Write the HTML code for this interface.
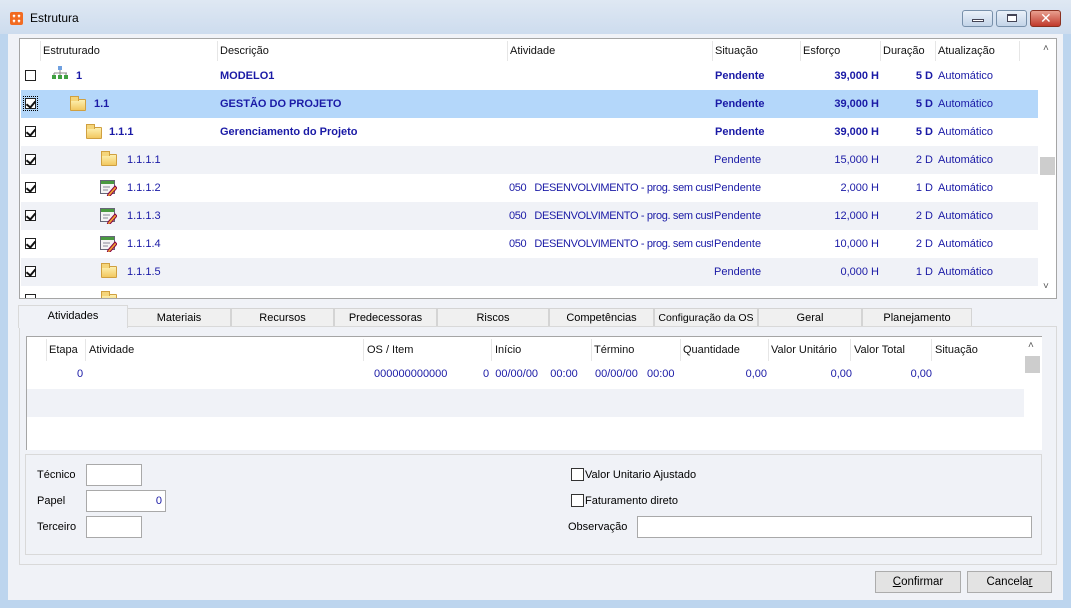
<!DOCTYPE html>
<html><head><meta charset="utf-8"><style>
*{margin:0;padding:0;box-sizing:border-box}
body{width:1071px;height:608px;position:relative;overflow:hidden;background:#bdd5ee;font-family:"Liberation Sans","DejaVu Sans",sans-serif;font-size:11px;color:#000}
.a{position:absolute;white-space:nowrap}
.title{left:0;top:0;width:1071px;height:34px;background:linear-gradient(#dfe8f3,#cddcee)}
.client{left:8px;top:34px;width:1055px;height:566px;background:#f0f2f7}
.grid{left:19px;top:38px;width:1038px;height:261px;border:1px solid #a5a5a5;background:#fff;overflow:hidden}
.hd{color:#111}
.row{position:absolute;left:1px;width:1017px;height:28px}
.row .a{top:8px}
.b{color:#1a1aa6}
.bold{font-weight:bold}
.cb{position:absolute;width:11px;height:11px;border:1px solid #222;background:#fff}
.cb.c::after{content:"";position:absolute;left:2px;top:0px;width:4px;height:7px;border:solid #111;border-width:0 2px 2px 0;transform:rotate(40deg)}
.fold{position:absolute;width:16px;height:12px;background:linear-gradient(#fdf0b0,#f2c860);border:1px solid #d0a040;border-radius:1px}
.fold::before{content:"";position:absolute;left:-1px;top:-4px;width:7px;height:4px;background:#f5d57a;border:1px solid #d0a040;border-bottom:none}
.tab{position:absolute;top:308px;height:19px;background:#f0f0f0;border:1px solid #d4d4d4;border-bottom:none;text-align:center;line-height:18px;font-size:11px;overflow:hidden}
.inp{position:absolute;background:#fff;border:1px solid #a9a9a9;height:22px}
.btn{position:absolute;top:571px;height:22px;background:#e3e3e3;border:1px solid #acacac;text-align:center;line-height:20px;font-size:11.5px}
.wb{position:absolute;top:10px;width:31px;height:17px;border:1px solid #7890aa;border-radius:3px;background:linear-gradient(#eaf1f9,#c3d4e8)}
.act{width:204px;overflow:hidden;letter-spacing:-0.35px}
</style></head><body>
<div class="a title"></div>
<div class="a" style="left:10px;top:12px;width:13px;height:13px;background:#f26b21;border-radius:2px"><svg width="13" height="13"><path d="M3 3l2 2M5 3L3 5M8 3l2 2M10 3L8 5M3 8l2 2M5 8L3 10M8 8l2 2M10 8L8 10" stroke="#fff" stroke-width="1.3"/></svg></div>
<div class="a" style="left:30px;top:11px;font-size:12px;color:#000">Estrutura</div>
<div class="wb" style="left:962px"><div style="position:absolute;left:9px;top:8px;width:12px;height:3px;background:#fff;border:1px solid #445"></div></div>
<div class="wb" style="left:996px"><div style="position:absolute;left:10px;top:3px;width:10px;height:8px;background:#fff;border:1px solid #445;border-top-width:2px"></div></div>
<div class="wb" style="left:1030px;background:linear-gradient(#e8a090,#c0392b);border-color:#8a3020"><div style="position:absolute;left:9px;top:-1px;color:#fff;font-weight:bold;font-size:14px">✕</div></div>
<div class="a client"></div>

<div class="a grid">
 <div class="row" style="top:0;height:23px;background:#fff">
  <span class="a hd" style="left:22px;top:6px">Estruturado</span><span class="a hd" style="left:199px;top:6px">Descrição</span><span class="a hd" style="left:489px;top:6px">Atividade</span><span class="a hd" style="left:694px;top:6px">Situação</span><span class="a hd" style="left:782px;top:6px">Esforço</span><span class="a hd" style="left:862px;top:6px">Duração</span><span class="a hd" style="left:917px;top:6px">Atualização</span>
  <div class="a" style="left:19px;top:2px;width:1px;height:20px;background:#e6e6e6"></div><div class="a" style="left:196px;top:2px;width:1px;height:20px;background:#e6e6e6"></div><div class="a" style="left:486px;top:2px;width:1px;height:20px;background:#e6e6e6"></div><div class="a" style="left:691px;top:2px;width:1px;height:20px;background:#e6e6e6"></div><div class="a" style="left:779px;top:2px;width:1px;height:20px;background:#e6e6e6"></div><div class="a" style="left:859px;top:2px;width:1px;height:20px;background:#e6e6e6"></div><div class="a" style="left:914px;top:2px;width:1px;height:20px;background:#e6e6e6"></div><div class="a" style="left:998px;top:2px;width:1px;height:20px;background:#e6e6e6"></div>
 </div>
 <div class="row" style="top:23px;background:#fff">
  <div class="cb" style="left:4px;top:8px"></div>
  <svg class="a" style="left:31px;top:4px" width="17" height="14"><rect x="6" y="0" width="4" height="4" fill="#6fa0e0"/><path d="M8 4v3M2 7h13M2 7v3M8 7v3M14 7v3" stroke="#888"/><rect x="0" y="9" width="4" height="4" fill="#3fa040"/><rect x="6" y="9" width="4" height="4" fill="#3fa040"/><rect x="12" y="9" width="4" height="4" fill="#3fa040"/></svg>
  <span class="a b bold" style="left:55px">1</span><span class="a b bold" style="left:199px">MODELO1</span>
  <span class="a b bold" style="left:694px">Pendente</span><span class="a b bold" style="left:780px;width:78px;text-align:right">39,000 H</span><span class="a b bold" style="left:860px;width:52px;text-align:right">5 D</span><span class="a b" style="left:917px">Automático</span>
 </div>
 <div class="row" style="top:51px;background:#b4d7fa">
  <div class="cb c" style="left:4px;top:8px;outline:1px dotted #000;outline-offset:1px"></div>
  <div class="fold" style="left:49px;top:9px"></div>
  <span class="a b bold" style="left:73px">1.1</span><span class="a b bold" style="left:199px">GESTÃO DO PROJETO</span>
  <span class="a b bold" style="left:694px">Pendente</span><span class="a b bold" style="left:780px;width:78px;text-align:right">39,000 H</span><span class="a b bold" style="left:860px;width:52px;text-align:right">5 D</span><span class="a b" style="left:917px">Automático</span>
 </div>
 <div class="row" style="top:79px;background:#fff">
  <div class="cb c" style="left:4px;top:8px"></div>
  <div class="fold" style="left:65px;top:9px"></div>
  <span class="a b bold" style="left:88px">1.1.1</span><span class="a b bold" style="left:199px">Gerenciamento do Projeto</span>
  <span class="a b bold" style="left:694px">Pendente</span><span class="a b bold" style="left:780px;width:78px;text-align:right">39,000 H</span><span class="a b bold" style="left:860px;width:52px;text-align:right">5 D</span><span class="a b" style="left:917px">Automático</span>
 </div>
 <div class="row" style="top:107px;background:#f0f2f7">
  <div class="cb c" style="left:4px;top:8px"></div><div class="fold" style="left:80px;top:8px"></div>
  <span class="a b" style="left:106px">1.1.1.1</span>
  <span class="a b" style="left:693px">Pendente</span><span class="a b" style="left:780px;width:78px;text-align:right">15,000 H</span><span class="a b" style="left:860px;width:52px;text-align:right">2 D</span><span class="a b" style="left:917px">Automático</span>
 </div>
 <div class="row" style="top:135px;background:#fff">
  <div class="cb c" style="left:4px;top:8px"></div>
  <svg class="a" style="left:79px;top:6px" width="17" height="16"><rect x="0.5" y="0.5" width="14" height="13" fill="#f4f4f4" stroke="#667"/><rect x="1" y="1" width="13" height="3" fill="#4a9a40"/><path d="M3 7h7M3 10h5" stroke="#889"/><path d="M8 14l7-8 2 2-7 8-3 1z" fill="#f0a030" stroke="#804"/></svg>
  <span class="a b" style="left:106px">1.1.1.2</span><span class="a b act" style="left:488px">050&nbsp;&nbsp; DESENVOLVIMENTO - prog. sem cust</span>
  <span class="a b" style="left:693px">Pendente</span><span class="a b" style="left:780px;width:78px;text-align:right">2,000 H</span><span class="a b" style="left:860px;width:52px;text-align:right">1 D</span><span class="a b" style="left:917px">Automático</span>
 </div>
 <div class="row" style="top:163px;background:#f0f2f7">
  <div class="cb c" style="left:4px;top:8px"></div>
  <svg class="a" style="left:79px;top:6px" width="17" height="16"><rect x="0.5" y="0.5" width="14" height="13" fill="#f4f4f4" stroke="#667"/><rect x="1" y="1" width="13" height="3" fill="#4a9a40"/><path d="M3 7h7M3 10h5" stroke="#889"/><path d="M8 14l7-8 2 2-7 8-3 1z" fill="#f0a030" stroke="#804"/></svg>
  <span class="a b" style="left:106px">1.1.1.3</span><span class="a b act" style="left:488px">050&nbsp;&nbsp; DESENVOLVIMENTO - prog. sem cust</span>
  <span class="a b" style="left:693px">Pendente</span><span class="a b" style="left:780px;width:78px;text-align:right">12,000 H</span><span class="a b" style="left:860px;width:52px;text-align:right">2 D</span><span class="a b" style="left:917px">Automático</span>
 </div>
 <div class="row" style="top:191px;background:#fff">
  <div class="cb c" style="left:4px;top:8px"></div>
  <svg class="a" style="left:79px;top:6px" width="17" height="16"><rect x="0.5" y="0.5" width="14" height="13" fill="#f4f4f4" stroke="#667"/><rect x="1" y="1" width="13" height="3" fill="#4a9a40"/><path d="M3 7h7M3 10h5" stroke="#889"/><path d="M8 14l7-8 2 2-7 8-3 1z" fill="#f0a030" stroke="#804"/></svg>
  <span class="a b" style="left:106px">1.1.1.4</span><span class="a b act" style="left:488px">050&nbsp;&nbsp; DESENVOLVIMENTO - prog. sem cust</span>
  <span class="a b" style="left:693px">Pendente</span><span class="a b" style="left:780px;width:78px;text-align:right">10,000 H</span><span class="a b" style="left:860px;width:52px;text-align:right">2 D</span><span class="a b" style="left:917px">Automático</span>
 </div>
 <div class="row" style="top:219px;background:#f0f2f7">
  <div class="cb c" style="left:4px;top:8px"></div><div class="fold" style="left:80px;top:8px"></div>
  <span class="a b" style="left:106px">1.1.1.5</span>
  <span class="a b" style="left:693px">Pendente</span><span class="a b" style="left:780px;width:78px;text-align:right">0,000 H</span><span class="a b" style="left:860px;width:52px;text-align:right">1 D</span><span class="a b" style="left:917px">Automático</span>
 </div>
 <div class="row" style="top:247px;background:#fff">
  <div class="cb" style="left:4px;top:8px"></div><div class="fold" style="left:80px;top:8px"></div>
 </div>
 <div class="a" style="left:1018px;top:0;width:18px;height:259px;background:#fff"></div>
 <div class="a" style="left:1023px;top:4px;color:#555;font-size:10px">&#x2C4;</div>
 <div class="a" style="left:1020px;top:118px;width:15px;height:18px;background:#cdcdcd"></div>
 <div class="a" style="left:1023px;top:242px;color:#555;font-size:10px">&#x2C5;</div>
</div>

<div class="tab" style="left:127px;width:104px">Materiais</div>
<div class="tab" style="left:231px;width:103px">Recursos</div>
<div class="tab" style="left:334px;width:103px">Predecessoras</div>
<div class="tab" style="left:437px;width:112px">Riscos</div>
<div class="tab" style="left:549px;width:105px">Competências</div>
<div class="tab" style="left:654px;width:104px;font-size:10.5px">Configuração da OS</div>
<div class="tab" style="left:758px;width:104px">Geral</div>
<div class="tab" style="left:862px;width:110px">Planejamento</div>
<div class="a" style="left:19px;top:326px;width:1038px;height:239px;border:1px solid #d9d9d9;background:#f0f2f7"></div>
<div class="a" style="left:18px;top:305px;width:110px;height:23px;background:#f0f2f7;border:1px solid #d9d9d9;border-bottom:none;text-align:center;line-height:20px">Atividades</div>

<div class="a" style="left:26px;top:336px;width:1016px;height:114px;background:#fff;border:1px solid #a5a5a5;border-right:none;border-bottom:none;overflow:hidden">
 <span class="a hd" style="left:22px;top:7px">Etapa</span><span class="a hd" style="left:62px;top:7px">Atividade</span><span class="a hd" style="left:340px;top:7px">OS / Item</span><span class="a hd" style="left:468px;top:7px">Início</span><span class="a hd" style="left:567px;top:7px">Término</span><span class="a hd" style="left:656px;top:7px">Quantidade</span><span class="a hd" style="left:744px;top:7px">Valor Unitário</span><span class="a hd" style="left:827px;top:7px">Valor Total</span><span class="a hd" style="left:908px;top:7px">Situação</span>
 <div class="a" style="left:19px;top:2px;width:1px;height:22px;background:#e6e6e6"></div><div class="a" style="left:58px;top:2px;width:1px;height:22px;background:#e6e6e6"></div><div class="a" style="left:336px;top:2px;width:1px;height:22px;background:#e6e6e6"></div><div class="a" style="left:464px;top:2px;width:1px;height:22px;background:#e6e6e6"></div><div class="a" style="left:564px;top:2px;width:1px;height:22px;background:#e6e6e6"></div><div class="a" style="left:653px;top:2px;width:1px;height:22px;background:#e6e6e6"></div><div class="a" style="left:741px;top:2px;width:1px;height:22px;background:#e6e6e6"></div><div class="a" style="left:823px;top:2px;width:1px;height:22px;background:#e6e6e6"></div><div class="a" style="left:904px;top:2px;width:1px;height:22px;background:#e6e6e6"></div>
 <span class="a b" style="left:50px;top:31px">0</span><span class="a b" style="left:347px;top:31px">000000000000</span><span class="a b" style="left:456px;top:31px">0&nbsp; 00/00/00&nbsp;&nbsp;&nbsp; 00:00</span><span class="a b" style="left:568px;top:31px">00/00/00&nbsp;&nbsp; 00:00</span><span class="a b" style="left:660px;top:31px;width:80px;text-align:right">0,00</span><span class="a b" style="left:745px;top:31px;width:80px;text-align:right">0,00</span><span class="a b" style="left:825px;top:31px;width:80px;text-align:right">0,00</span>
 <div class="a" style="left:0;top:52px;width:997px;height:28px;background:#f0f2f7"></div>
 <div class="a" style="left:997px;top:0;width:19px;height:114px;background:#fff"></div>
 <div class="a" style="left:1001px;top:3px;color:#555;font-size:10px">&#x2C4;</div>
 <div class="a" style="left:998px;top:19px;width:15px;height:17px;background:#cdcdcd"></div>
</div>

<div class="a" style="left:25px;top:454px;width:1017px;height:101px;border:1px solid #d9d9d9"></div>
<span class="a" style="left:37px;top:469px">Técnico</span><div class="inp" style="left:86px;top:464px;width:56px"></div>
<span class="a" style="left:37px;top:495px">Papel</span><div class="inp" style="left:86px;top:490px;width:80px"><span class="a b" style="right:3px;top:4px">0</span></div>
<span class="a" style="left:37px;top:521px">Terceiro</span><div class="inp" style="left:86px;top:516px;width:56px"></div>
<div class="a" style="left:571px;top:468px;width:13px;height:13px;border:1px solid #333;background:#fff"></div><span class="a" style="left:585px;top:469px">Valor Unitario Ajustado</span>
<div class="a" style="left:571px;top:494px;width:13px;height:13px;border:1px solid #333;background:#fff"></div><span class="a" style="left:585px;top:495px">Faturamento direto</span>
<span class="a" style="left:568px;top:521px">Observação</span><div class="inp" style="left:637px;top:516px;width:395px"></div>

<div class="btn" style="left:875px;width:86px"><u>C</u>onfirmar</div>
<div class="btn" style="left:967px;width:85px">Cancela<u>r</u></div>
</body></html>
